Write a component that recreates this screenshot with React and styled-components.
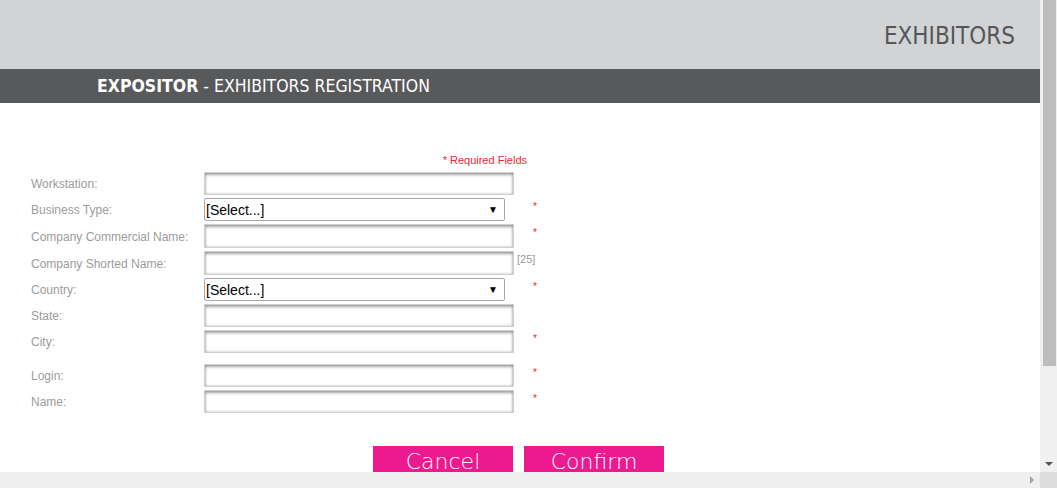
import React from 'react'
import styled, { createGlobalStyle } from 'styled-components'

const GlobalStyle = createGlobalStyle`
  html, body {
    margin: 0;
    padding: 0;
    overflow: hidden;
    background: #fff;
  }
`

const Frame = styled.div`
  width: 1057px;
  height: 488px;
  display: grid;
  grid-template-columns: 1fr 17px;
  grid-template-rows: 1fr 16px;
`

const Viewport = styled.div`
  overflow: hidden;
  font-family: "Liberation Sans", Arial, sans-serif;
`

const TopBar = styled.header`
  height: 69px;
  background: #d2d3d5;
  display: flex;
  justify-content: flex-end;
  align-items: center;
  padding-right: 25px;
  h1 {
    margin: 0;
    padding-top: 2px;
    font-family: "DejaVu Sans Condensed", sans-serif;
    font-stretch: condensed;
    font-weight: 500;
    font-size: 24px;
    color: #555658;
  }
`

const TitleBar = styled.div`
  height: 34px;
  background: #58595b;
  display: flex;
  align-items: center;
  padding-left: 97px;
  font-family: "DejaVu Sans Condensed", sans-serif;
  font-stretch: condensed;
  font-size: 17.5px;
  color: #fff;
  b {
    font-weight: bold;
  }
`

const FormArea = styled.form`
  padding: 51px 0 0 31px;
`

const Required = styled.div`
  width: 496px;
  text-align: right;
  color: #f2262a;
  font-size: 11px;
  margin-bottom: 6px;
`

const Grid = styled.div`
  display: grid;
  grid-template-columns: 173px 310px auto;
  row-gap: 3px;
  align-items: center;
`

const Label = styled.label`
  font-size: 12px;
  color: #9c9c9c;
  padding-top: 1px;
`

const TextInput = styled.input`
  box-sizing: border-box;
  width: 310px;
  height: ${p => (p.tall ? 24 : 23)}px;
  margin: 0;
  border: 1px solid #d0d0d0;
  background: #fff;
  box-shadow: inset 0 2px 3px rgba(0, 0, 0, 0.32), inset 0 0 3px rgba(0, 0, 0, 0.25);
`

const SelectBox = styled.div`
  box-sizing: border-box;
  width: 301px;
  height: 23px;
  border: 1px solid #a6a6a6;
  border-radius: 2px;
  display: flex;
  align-items: center;
  background: #fff;
  select {
    flex: 1;
    appearance: none;
    border: none;
    background: transparent;
    font-family: "Liberation Sans", Arial, sans-serif;
    font-size: 14px;
    color: #000;
    padding: 0 0 0 1px;
    outline: none;
  }
  span {
    font-size: 10px;
    color: #000;
    padding-right: 6px;
  }
`

const Mark = styled.span`
  align-self: start;
  margin-left: 19px;
  margin-top: 3px;
  color: #f2262a;
  font-size: 10px;
`

const Hint = styled.span`
  align-self: start;
  margin-left: 3px;
  margin-top: 2px;
  color: #9a9a9a;
  font-size: 11px;
`

const Spacer = styled.div`
  grid-column: 1 / -1;
  height: 5px;
`

const Buttons = styled.div`
  display: flex;
  gap: 11px;
  margin: 33px 0 0 342px;
`

const PinkButton = styled.button`
  width: 140px;
  height: 36px;
  border: none;
  background: #ed1a8f;
  color: #fff;
  font-family: "DejaVu Sans", sans-serif;
  font-weight: 200;
  font-size: 22px;
  line-height: 24px;
  display: flex;
  justify-content: center;
  align-items: flex-start;
  padding: 4px 0 0;
`

const VScroll = styled.div`
  background: #f0f0f0;
  display: flex;
  flex-direction: column;
  align-items: center;
  padding-left: 1px;
`

const Thumb = styled.div`
  width: 13px;
  height: 366px;
  background: #bdbdbd;
`

const DownArrow = styled.div`
  margin-top: auto;
  margin-bottom: 6px;
  width: 0;
  height: 0;
  border-left: 4px solid transparent;
  border-right: 4px solid transparent;
  border-top: 4px solid #505050;
`

const HScroll = styled.div`
  background: #efefef;
  display: flex;
  justify-content: flex-end;
  align-items: center;
  padding-right: 6px;
`

const RightArrow = styled.div`
  width: 0;
  height: 0;
  border-top: 4px solid transparent;
  border-bottom: 4px solid transparent;
  border-left: 4px solid #a3a3a3;
`

const Corner = styled.div`
  background: #dcdcdc;
`

const Select = () => (
  <SelectBox>
    <select defaultValue="">
      <option value="">[Select...]</option>
    </select>
    <span>▼</span>
  </SelectBox>
)

export default function App() {
  return (
    <>
      <GlobalStyle />
      <Frame>
        <Viewport>
          <TopBar>
            <h1>EXHIBITORS</h1>
          </TopBar>
          <TitleBar>
            <b>EXPOSITOR</b>&nbsp;- EXHIBITORS REGISTRATION
          </TitleBar>
          <FormArea onSubmit={e => e.preventDefault()}>
            <Required>* Required Fields</Required>
            <Grid>
              <Label>Workstation:</Label>
              <TextInput />
              <span />

              <Label>Business Type:</Label>
              <Select />
              <Mark>*</Mark>

              <Label>Company Commercial Name:</Label>
              <TextInput tall />
              <Mark>*</Mark>

              <Label>Company Shorted Name:</Label>
              <TextInput tall />
              <Hint>[25]</Hint>

              <Label>Country:</Label>
              <Select />
              <Mark>*</Mark>

              <Label>State:</Label>
              <TextInput />
              <span />

              <Label>City:</Label>
              <TextInput />
              <Mark>*</Mark>

              <Spacer />

              <Label>Login:</Label>
              <TextInput />
              <Mark>*</Mark>

              <Label>Name:</Label>
              <TextInput />
              <Mark>*</Mark>
            </Grid>
            <Buttons>
              <PinkButton type="button">Cancel</PinkButton>
              <PinkButton type="submit">Confirm</PinkButton>
            </Buttons>
          </FormArea>
        </Viewport>
        <VScroll>
          <Thumb />
          <DownArrow />
        </VScroll>
        <HScroll>
          <RightArrow />
        </HScroll>
        <Corner />
      </Frame>
    </>
  )
}
